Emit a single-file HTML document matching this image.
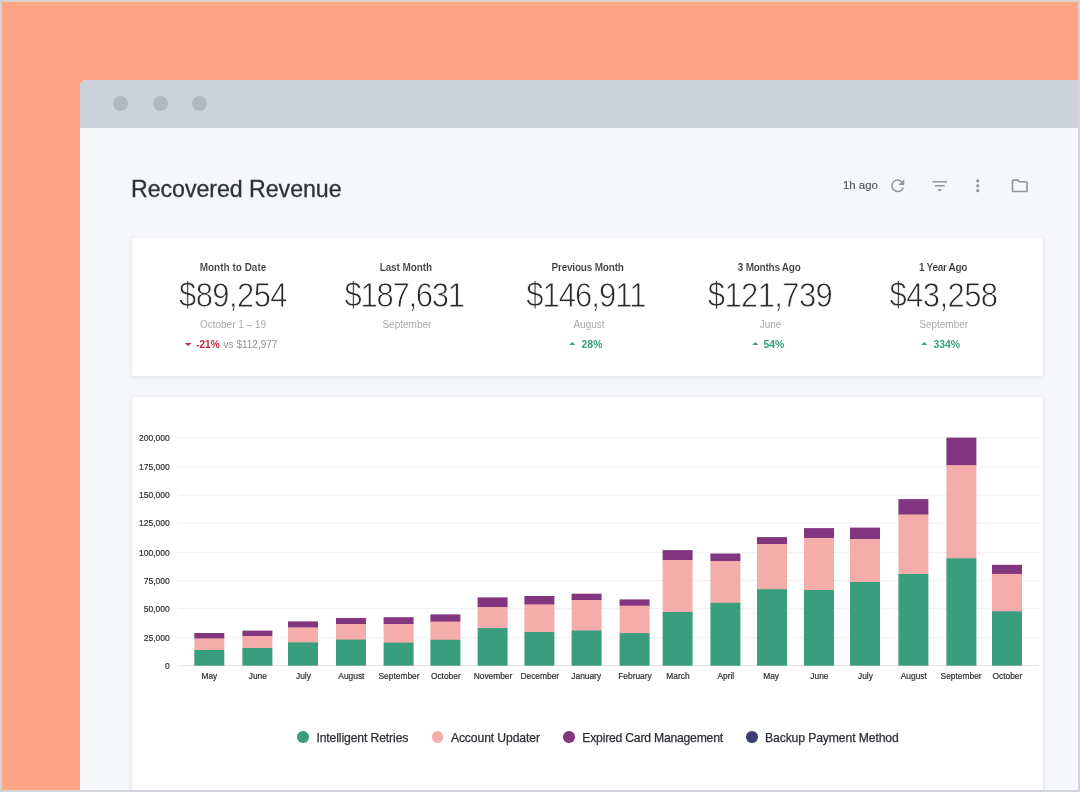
<!DOCTYPE html>
<html>
<head>
<meta charset="utf-8">
<title>Recovered Revenue</title>
<style>
*{margin:0;padding:0;box-sizing:border-box;}
html,body{width:1080px;height:792px;overflow:hidden;}
body{background:#d3d5dc;font-family:"Liberation Sans",sans-serif;position:relative;}
.abs{position:absolute;}
#bg{left:2px;top:2px;width:1076px;height:788px;background:#ffa587;overflow:hidden;}
#win{left:78px;top:78px;width:1000px;height:712px;background:#f6f7fb;border-top-left-radius:6px;overflow:hidden;}
#bar{left:0;top:0;width:1000px;height:48px;background:#cdd1db;}
.dot{width:15px;height:15px;border-radius:50%;background:#b2b7c3;top:15.8px;}
.t{white-space:nowrap;line-height:1;}
.card{background:#fff;box-shadow:0 1px 4px rgba(60,70,100,.13),0 0 1px rgba(60,70,100,.10);border-radius:2px;}
.c{transform:translateX(-50%);text-align:center;}
.lab{font-weight:bold;font-size:10px;color:#37373a;-webkit-text-stroke:0.12px #fff;}
.num{font-size:31px;color:#2b2b2e;-webkit-text-stroke:0.7px #fff;letter-spacing:-0.6px;transform:translate(-50%,1.1px) scaleY(1.12);transform-origin:50% 26px;}
.sub{font-size:10px;color:#a9a9ad;}
.chg{font-size:10.4px;color:#35a07a;font-weight:bold;}
.yl{font-size:8.5px;color:#303034;-webkit-text-stroke:0.2px #303034;text-align:right;width:40px;}
.xl{font-size:8.4px;color:#303034;-webkit-text-stroke:0.2px #303034;transform:translateX(-50%);}
.lg{font-size:12.2px;color:#2c2f34;-webkit-text-stroke:0.25px #2c2f34;letter-spacing:-0.12px;}
.ld{width:11.5px;height:11.5px;border-radius:50%;}
</style>
</head>
<body>
<div class="abs" style="left:0;top:0;width:1080px;height:2px;background:#dbd1d1"></div><div class="abs" style="left:0;top:0;width:2px;height:792px;background:#d9d0d0"></div>
<div id="bg" class="abs">
<div id="win" class="abs">
  <div id="bar" class="abs">
    <div class="abs dot" style="left:33.2px"></div>
    <div class="abs dot" style="left:72.7px"></div>
    <div class="abs dot" style="left:112.3px"></div>
  </div>
</div>
</div>
<!-- everything below positioned in page coordinates -->
<div id="page" class="abs" style="left:0;top:0;width:1080px;height:790px;overflow:hidden;will-change:transform;">

<div id="title" class="abs t" style="left:131px;top:178px;font-size:23.2px;letter-spacing:-0.05px;color:#2e3338;-webkit-text-stroke:0.3px #2e3338;">Recovered Revenue</div>
<div id="ago" class="abs t" style="left:843px;top:179.5px;font-size:11.4px;color:#55585f;-webkit-text-stroke:0.2px #55585f;">1h ago</div>

<!-- header icons -->
<svg class="abs" style="left:887.85px;top:175.7px" width="19.5" height="19.5" viewBox="0 0 24 24"><path fill="#92959c" d="M17.65 6.35A7.96 7.96 0 0 0 12 4a8 8 0 1 0 7.73 10h-2.08A6 6 0 1 1 12 6c1.66 0 3.14.69 4.22 1.78L13 11h7V4l-2.35 2.35z"/></svg>
<svg class="abs" style="left:929.85px;top:175.7px" width="19.5" height="19.5" viewBox="0 0 24 24"><path fill="#92959c" d="M10 18h4v-2h-4v2zM3 6v2h18V6H3zm3 7h12v-2H6v2z"/></svg>
<svg class="abs" style="left:967.9px;top:176px" width="19.5" height="19.5" viewBox="0 0 24 24"><path fill="#92959c" d="M12 8a2 2 0 1 0 0-4 2 2 0 0 0 0 4zm0 2a2 2 0 1 0 0 4 2 2 0 0 0 0-4zm0 6a2 2 0 1 0 0 4 2 2 0 0 0 0-4z"/></svg>
<svg class="abs" style="left:1009.7px;top:176px" width="19.5" height="19.5" viewBox="0 0 24 24"><path fill="#92959c" d="M9.17 6l2 2H20v10H4V6h5.17M10 4H4a2 2 0 0 0-2 2v12a2 2 0 0 0 2 2h16a2 2 0 0 0 2-2V8a2 2 0 0 0-2-2h-8l-2-2z"/></svg>

<!-- stats card -->
<div id="stats" class="abs card" style="left:131.5px;top:238px;width:911.6px;height:138px;"></div>
<div id="chartcard" class="abs card" style="left:131.5px;top:397px;width:911.6px;height:420px;"></div>

<!-- stats -->
<div id="lab0" class="abs t c lab" style="left:233px;top:262.5px;">Month to Date</div>
<div id="num0" class="abs t c num" style="left:233px;top:280px;">$89,254</div>
<div id="sub0" class="abs t c sub" style="left:233px;top:320px;">October 1 – 19</div>
<div id="chg0" class="abs t" style="left:184.5px;top:340.2px;font-size:10px;"><svg style="position:absolute;left:0.3px;top:2.5px" width="6.2" height="3.2" viewBox="0 0 6.2 3.2"><path d="M0 0L6.2 0L3.1 3.2Z" fill="#c8283c"/></svg><span style="display:inline-block;width:11.7px"></span><b style="color:#c8283c;margin-right:1.3px">-21%</b><span style="color:#8f8f94"> vs $112,977</span></div>
<div id="lab1" class="abs t c lab" style="left:405.8px;top:262.5px;letter-spacing:-0.1px;">Last Month</div>
<div id="num1" class="abs t c num" style="left:404.2px;top:280px;letter-spacing:-1.25px;">$187,631</div>
<div id="sub1" class="abs t c sub" style="left:406.9px;top:320px;">September</div>
<div id="lab2" class="abs t c lab" style="left:587.6px;top:262.5px;letter-spacing:-0.2px;">Previous Month</div>
<div id="num2" class="abs t c num" style="left:585.9px;top:280px;letter-spacing:-0.95px;">$146,911</div>
<div id="sub2" class="abs t c sub" style="left:589px;top:320px;">August</div>
<div id="lab3" class="abs t c lab" style="left:769.2px;top:262.5px;letter-spacing:-0.25px;">3 Months Ago</div>
<div id="num3" class="abs t c num" style="left:770px;top:280px;">$121,739</div>
<div id="sub3" class="abs t c sub" style="left:770.6px;top:320px;">June</div>
<div id="lab4" class="abs t c lab" style="left:943.1px;top:262.5px;letter-spacing:-0.3px;">1 Year Ago</div>
<div id="num4" class="abs t c num" style="left:943.5px;top:280px;">$43,258</div>
<div id="sub4" class="abs t c sub" style="left:943.7px;top:320px;">September</div>
<svg class="abs" style="left:569.4px;top:342.2px" width="6.4" height="3.2" viewBox="0 0 6.4 3.2"><path d="M0 3.2L3.2 0L6.4 3.2Z" fill="#35a07a"/></svg><div id="chg2" class="abs t chg" style="left:581.6px;top:339.9px;">28%</div>
<svg class="abs" style="left:752.0px;top:342.2px" width="6.4" height="3.2" viewBox="0 0 6.4 3.2"><path d="M0 3.2L3.2 0L6.4 3.2Z" fill="#35a07a"/></svg><div id="chg3" class="abs t chg" style="left:763.5px;top:339.9px;">54%</div>
<svg class="abs" style="left:921.4px;top:342.2px" width="6.4" height="3.2" viewBox="0 0 6.4 3.2"><path d="M0 3.2L3.2 0L6.4 3.2Z" fill="#35a07a"/></svg><div id="chg4" class="abs t chg" style="left:933.4px;top:339.9px;">334%</div>

<!-- chart -->
<svg id="chart" class="abs" style="left:0;top:0" width="1080" height="792" viewBox="0 0 1080 792">
<rect x="179" y="665.10" width="860" height="1" fill="#e3e3e8"/>
<rect x="178" y="637.10" width="861.5" height="1" fill="#f1f1f5"/>
<rect x="178" y="608.10" width="861.5" height="1" fill="#f1f1f5"/>
<rect x="178" y="580.00" width="861.5" height="1" fill="#f1f1f5"/>
<rect x="178" y="551.80" width="861.5" height="1" fill="#f1f1f5"/>
<rect x="178" y="522.70" width="861.5" height="1" fill="#f1f1f5"/>
<rect x="178" y="494.60" width="861.5" height="1" fill="#f1f1f5"/>
<rect x="178" y="466.40" width="861.5" height="1" fill="#f1f1f5"/>
<rect x="178" y="437.20" width="861.5" height="1" fill="#f1f1f5"/>
<rect x="194.30" y="633.00" width="30" height="5.90" fill="#82367f"/><rect x="194.30" y="638.40" width="30" height="12.10" fill="#f4adab"/><rect x="194.30" y="650.00" width="30" height="15.70" fill="#3a9d7e"/>
<rect x="242.40" y="630.60" width="30" height="5.90" fill="#82367f"/><rect x="242.40" y="636.00" width="30" height="12.50" fill="#f4adab"/><rect x="242.40" y="648.00" width="30" height="17.70" fill="#3a9d7e"/>
<rect x="288.00" y="621.40" width="30" height="6.50" fill="#82367f"/><rect x="288.00" y="627.40" width="30" height="15.50" fill="#f4adab"/><rect x="288.00" y="642.40" width="30" height="23.30" fill="#3a9d7e"/>
<rect x="336.00" y="618.00" width="30" height="6.50" fill="#82367f"/><rect x="336.00" y="624.00" width="30" height="16.10" fill="#f4adab"/><rect x="336.00" y="639.60" width="30" height="26.10" fill="#3a9d7e"/>
<rect x="383.60" y="617.20" width="30" height="7.30" fill="#82367f"/><rect x="383.60" y="624.00" width="30" height="19.10" fill="#f4adab"/><rect x="383.60" y="642.60" width="30" height="23.10" fill="#3a9d7e"/>
<rect x="430.40" y="614.40" width="30" height="7.60" fill="#82367f"/><rect x="430.40" y="621.50" width="30" height="18.80" fill="#f4adab"/><rect x="430.40" y="639.80" width="30" height="25.90" fill="#3a9d7e"/>
<rect x="477.60" y="597.40" width="30" height="10.10" fill="#82367f"/><rect x="477.60" y="607.00" width="30" height="21.60" fill="#f4adab"/><rect x="477.60" y="628.10" width="30" height="37.60" fill="#3a9d7e"/>
<rect x="524.40" y="596.00" width="30" height="8.90" fill="#82367f"/><rect x="524.40" y="604.40" width="30" height="28.10" fill="#f4adab"/><rect x="524.40" y="632.00" width="30" height="33.70" fill="#3a9d7e"/>
<rect x="571.60" y="593.70" width="30" height="6.80" fill="#82367f"/><rect x="571.60" y="600.00" width="30" height="31.00" fill="#f4adab"/><rect x="571.60" y="630.50" width="30" height="35.20" fill="#3a9d7e"/>
<rect x="619.60" y="599.40" width="30" height="6.80" fill="#82367f"/><rect x="619.60" y="605.70" width="30" height="27.90" fill="#f4adab"/><rect x="619.60" y="633.10" width="30" height="32.60" fill="#3a9d7e"/>
<rect x="662.60" y="550.10" width="30" height="10.40" fill="#82367f"/><rect x="662.60" y="560.00" width="30" height="52.50" fill="#f4adab"/><rect x="662.60" y="612.00" width="30" height="53.70" fill="#3a9d7e"/>
<rect x="710.40" y="553.50" width="30" height="8.10" fill="#82367f"/><rect x="710.40" y="561.10" width="30" height="42.20" fill="#f4adab"/><rect x="710.40" y="602.80" width="30" height="62.90" fill="#3a9d7e"/>
<rect x="757.00" y="537.10" width="30" height="7.40" fill="#82367f"/><rect x="757.00" y="544.00" width="30" height="45.70" fill="#f4adab"/><rect x="757.00" y="589.20" width="30" height="76.50" fill="#3a9d7e"/>
<rect x="804.00" y="528.10" width="30" height="10.40" fill="#82367f"/><rect x="804.00" y="538.00" width="30" height="52.50" fill="#f4adab"/><rect x="804.00" y="590.00" width="30" height="75.70" fill="#3a9d7e"/>
<rect x="850.00" y="527.60" width="30" height="12.00" fill="#82367f"/><rect x="850.00" y="539.10" width="30" height="43.40" fill="#f4adab"/><rect x="850.00" y="582.00" width="30" height="83.70" fill="#3a9d7e"/>
<rect x="898.40" y="499.10" width="30" height="15.90" fill="#82367f"/><rect x="898.40" y="514.50" width="30" height="60.00" fill="#f4adab"/><rect x="898.40" y="574.00" width="30" height="91.70" fill="#3a9d7e"/>
<rect x="946.40" y="437.60" width="30" height="28.10" fill="#82367f"/><rect x="946.40" y="465.20" width="30" height="93.60" fill="#f4adab"/><rect x="946.40" y="558.30" width="30" height="107.40" fill="#3a9d7e"/>
<rect x="992.00" y="564.80" width="30" height="9.60" fill="#82367f"/><rect x="992.00" y="573.90" width="30" height="37.90" fill="#f4adab"/><rect x="992.00" y="611.30" width="30" height="54.40" fill="#3a9d7e"/>
</svg>
<div id="yl0" class="abs t yl" style="left:129.7px;top:661.90px;">0</div>
<div id="yl1" class="abs t yl" style="left:129.7px;top:633.80px;">25,000</div>
<div id="yl2" class="abs t yl" style="left:129.7px;top:604.80px;">50,000</div>
<div id="yl3" class="abs t yl" style="left:129.7px;top:576.70px;">75,000</div>
<div id="yl4" class="abs t yl" style="left:129.7px;top:548.50px;">100,000</div>
<div id="yl5" class="abs t yl" style="left:129.7px;top:519.40px;">125,000</div>
<div id="yl6" class="abs t yl" style="left:129.7px;top:491.30px;">150,000</div>
<div id="yl7" class="abs t yl" style="left:129.7px;top:463.10px;">175,000</div>
<div id="yl8" class="abs t yl" style="left:129.7px;top:433.90px;">200,000</div>
<div id="xl0" class="abs t xl" style="left:209.40px;top:672.4px;">May</div>
<div id="xl1" class="abs t xl" style="left:257.80px;top:672.4px;">June</div>
<div id="xl2" class="abs t xl" style="left:303.40px;top:672.4px;">July</div>
<div id="xl3" class="abs t xl" style="left:351.40px;top:672.4px;">August</div>
<div id="xl4" class="abs t xl" style="left:399.00px;top:672.4px;">September</div>
<div id="xl5" class="abs t xl" style="left:445.80px;top:672.4px;">October</div>
<div id="xl6" class="abs t xl" style="left:493.00px;top:672.4px;">November</div>
<div id="xl7" class="abs t xl" style="left:539.80px;top:672.4px;">December</div>
<div id="xl8" class="abs t xl" style="left:586.20px;top:672.4px;">January</div>
<div id="xl9" class="abs t xl" style="left:635.00px;top:672.4px;">February</div>
<div id="xl10" class="abs t xl" style="left:678.00px;top:672.4px;">March</div>
<div id="xl11" class="abs t xl" style="left:725.80px;top:672.4px;">April</div>
<div id="xl12" class="abs t xl" style="left:771.10px;top:672.4px;">May</div>
<div id="xl13" class="abs t xl" style="left:819.40px;top:672.4px;">June</div>
<div id="xl14" class="abs t xl" style="left:865.40px;top:672.4px;">July</div>
<div id="xl15" class="abs t xl" style="left:913.80px;top:672.4px;">August</div>
<div id="xl16" class="abs t xl" style="left:961.10px;top:672.4px;">September</div>
<div id="xl17" class="abs t xl" style="left:1007.40px;top:672.4px;">October</div>
<div class="abs ld" style="left:297.25px;top:731.3px;background:#3a9d7e"></div><div id="lg0" class="abs t lg" style="left:316.4px;top:731.5px;">Intelligent Retries</div>
<div class="abs ld" style="left:431.85px;top:731.3px;background:#f4adab"></div><div id="lg1" class="abs t lg" style="left:450.9px;top:731.5px;">Account Updater</div>
<div class="abs ld" style="left:563.35px;top:731.3px;background:#82367f"></div><div id="lg2" class="abs t lg" style="left:582.3px;top:731.5px;letter-spacing:-0.22px;">Expired Card Management</div>
<div class="abs ld" style="left:746.25px;top:731.3px;background:#3d3d7a"></div><div id="lg3" class="abs t lg" style="left:765px;top:731.5px;">Backup Payment Method</div>

</div>
</body>
</html>
